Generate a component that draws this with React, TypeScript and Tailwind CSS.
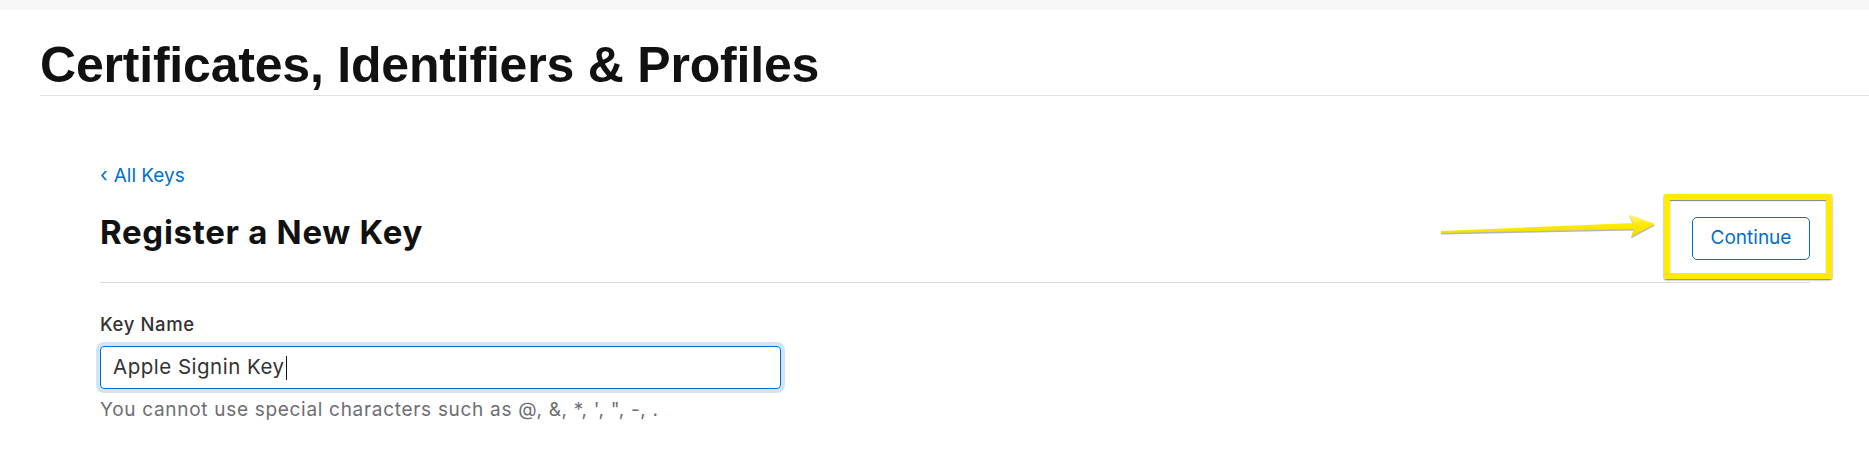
import React from "react";

function Arrow() {
  return (
    <svg
      className="absolute left-[-255px] top-[-8px]"
      width="224"
      height="36"
      viewBox="0 0 224 36"
    >
      <defs>
        <linearGradient id="ag" x1="0" y1="0" x2="0" y2="1">
          <stop offset="0" stopColor="#fff7a0" />
          <stop offset="0.45" stopColor="#ffec00" />
          <stop offset="1" stopColor="#f2d800" />
        </linearGradient>
      </defs>
      <polygon
        points="4,23.5 196,15.5 192,6.5 218,16.5 194,29.5 197,21.5 4,25.5"
        fill="#7a7a7a"
        opacity="0.55"
      />
      <polygon
        points="4,22 196,14 192,5 218,15 194,28 197,20 4,24"
        fill="url(#ag)"
      />
    </svg>
  );
}

export default function App() {
  return (
    <div className="min-h-[457px] w-[1869px] bg-white font-['Inter',sans-serif] text-[#1d1d1f]">
      <div className="h-[10px] bg-[#f7f7f7]" />
      <div className="ml-[40px] border-b border-[#e3e3e3] pb-[5px] pt-[31px]">
        <h1 className="font-['Liberation_Sans',Arial,sans-serif] text-[50px] font-bold leading-[49px] tracking-[-0.2px] text-[#111]">
          Certificates, Identifiers &amp; Profiles
        </h1>
      </div>

      <div className="pl-[100px] pr-[59px]">
        <a className="mt-[68px] flex items-center gap-[6px] text-[19px] leading-[23px] text-[#0070c9]">
          <span className="text-[20px] leading-[23px]">‹</span>
          <span>All Keys</span>
        </a>

        <div className="mt-[26px] flex items-start justify-between border-b border-[#dcdcdc] pb-[22px]">
          <h2 className="text-[33px] font-bold leading-[38px] tracking-[0.7px] text-[#111]">
            Register a New Key
          </h2>
          <div className="relative mt-[4px]">
            <Arrow />
            <div className="pointer-events-none absolute bottom-[-19px] left-[-28px] right-[-22px] top-[-23px] rounded-[2px] border-[6px] border-[#ffea00] shadow-[0_1px_2px_rgba(0,0,0,0.55),inset_0_1px_1px_rgba(0,0,0,0.5)]" />
            <button className="flex h-[43px] w-[118px] items-center justify-center rounded-[5px] border border-[#0070c9] bg-white text-[19px] text-[#0070c9]">
              Continue
            </button>
          </div>
        </div>

        <div className="mt-[30px] text-[18.5px] font-medium leading-[22px] tracking-[0.6px] text-[#333]">
          Key Name
        </div>
        <div className="mt-[11px] flex h-[43px] w-[681px] items-center rounded-[4px] border border-[#0070c9] pl-[12px] text-[20.5px] tracking-[0.5px] text-[#333] shadow-[0_0_0_4px_#d3e4f6]">
          <span>Apple Signin Key</span>
          <span className="ml-[1px] h-[24px] w-[1px] bg-[#111]" />
        </div>
        <div className="mt-[9px] text-[19px] leading-[23px] tracking-[0.7px] text-[#6e6e73]">
          You cannot use special characters such as @, &amp;, *, &apos;, &quot;, -, .
        </div>
      </div>
    </div>
  );
}
